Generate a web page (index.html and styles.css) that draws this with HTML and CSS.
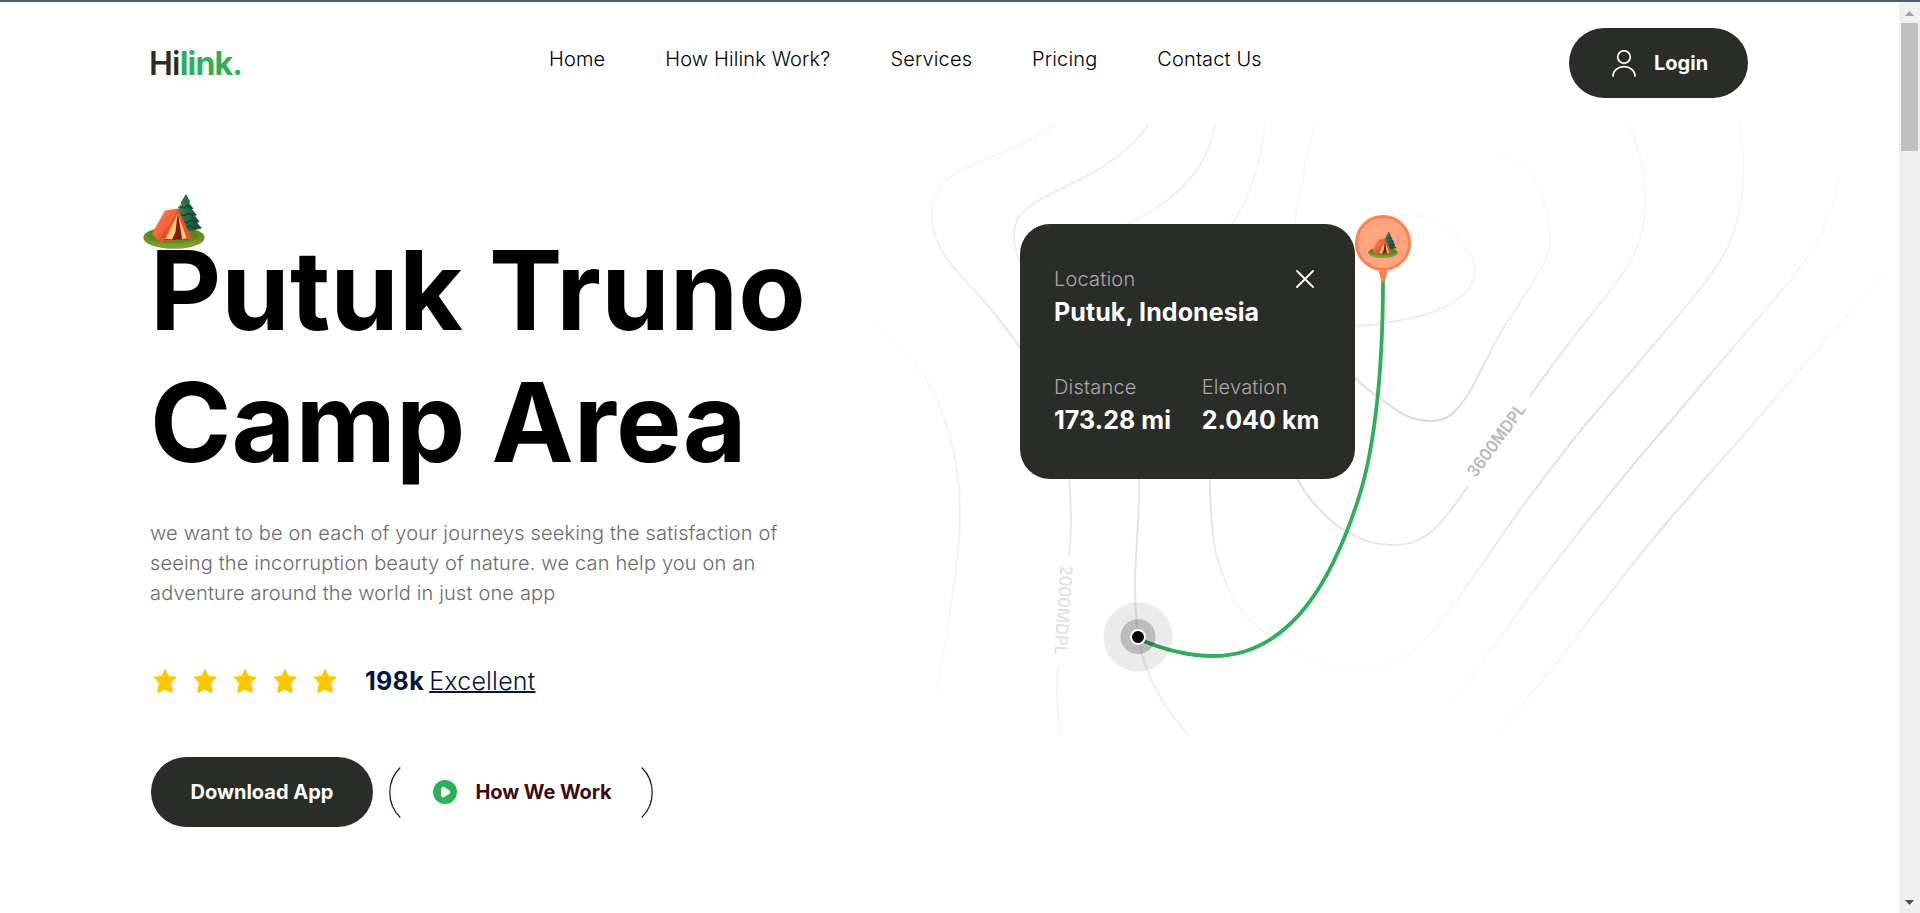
FILE: index.html
```html
<!DOCTYPE html>
<html lang="en">
<head>
<meta charset="utf-8">
<title>Hilink</title>
<link rel="stylesheet" href="styles.css">
</head>
<body>
<svg class="defs" width="0" height="0" aria-hidden="true">
  <defs>
    <linearGradient id="grass" x1="0" y1="0" x2="0" y2="1"><stop offset="0" stop-color="#5f7d1c"/><stop offset=".6" stop-color="#6c9226"/><stop offset="1" stop-color="#86a832"/></linearGradient>
    <linearGradient id="canvas" x1="0" y1="0" x2="1" y2="1"><stop offset="0" stop-color="#fb8a5c"/><stop offset=".5" stop-color="#f4643a"/><stop offset="1" stop-color="#e0492a"/></linearGradient>
    <linearGradient id="tree" x1="0" y1="0" x2="1" y2="0"><stop offset="0" stop-color="#3d8a5a"/><stop offset=".5" stop-color="#246345"/><stop offset="1" stop-color="#17452f"/></linearGradient>
    <symbol id="tent" viewBox="0 0 62 55">
      <ellipse cx="31" cy="43.6" rx="30.7" ry="11.2" fill="url(#grass)"/>
      <ellipse cx="30" cy="41.500" rx="25" ry="7.500" fill="#557a1d" opacity=".5"/>
      <path d="M43 0l4.500 8.500-1.500.2 4.500 6-1.500.5 5 6-2 .5 4.500 6-2.500 1 5 5.500-10 2.500-12-1-4-20 3-1-1-1.500 3.500-3-1-1.500z" fill="url(#tree)"/>
      <path d="M37 13l4 1 3-2 4 2M36 20l5 1.500 4-2 6 2M39 27l5 1.500 4-2 6 2M43 33l4-1 5 2" fill="none" stroke="#14402c" stroke-width="1.200"/>
      <path d="M22 16.500L35 14.500 15.500 47.500 9 39.500z" fill="url(#canvas)"/>
      <path d="M35 14.500L49 45l-33.500 2.500z" fill="#e9512d"/>
      <path d="M35 21l9.500 24.200-22.500 1z" fill="#8c160f"/>
      <path d="M34.500 20l-2 18-3.500 7.500-6.500-.5zM35 20l3 18 1 7 5-.5z" fill="#edcf7b"/>
    </symbol>
    <symbol id="star" viewBox="0 0 24 24">
      <path d="M12 .8l3.300 6.500 7.500 1.100-5.300 5.200 1.600 8.500c.2 1-.4 1.400-1.300.9L12 20l-5.800 3c-.9.5-1.500.1-1.300-.9l1.600-8.500L1.200 8.400l7.500-1.100z" fill="#ffc700" stroke="#ffc700" stroke-width="1.200" stroke-linejoin="round"/>
    </symbol>
  </defs>
</svg>

<div class="window">
  <div class="page">
    <header class="header">
      <a class="logo">Hi<span class="logo-accent">link.</span></a>
      <nav class="nav">
        <a>Home</a><a>How Hilink Work?</a><a>Services</a><a>Pricing</a><a>Contact Us</a>
      </nav>
      <button class="btn btn-login">
        <svg class="user-icon" viewBox="0 0 24 27"><g fill="none" stroke="#fff" stroke-width="1.700" stroke-linecap="round"><circle cx="12" cy="7" r="6.300"/><path d="M1 26c0-5.500 5-9.300 11-9.300S23 20.500 23 26"/></g></svg>
        Login
      </button>
    </header>

    <main class="hero">
      <section class="intro">
        <svg class="tent"><use href="#tent"/></svg>
        <h1 class="title">Putuk Truno Camp Area</h1>
        <p class="lead">we want to be on each of your journeys seeking the satisfaction of seeing the incorruption beauty of nature. we can help you on an adventure around the world in just one app</p>
        <div class="rating">
          <div class="stars">
            <svg class="star"><use href="#star"/></svg><svg class="star"><use href="#star"/></svg><svg class="star"><use href="#star"/></svg><svg class="star"><use href="#star"/></svg><svg class="star"><use href="#star"/></svg>
          </div>
          <p class="score"><b>198k</b> <a class="score-link">Excellent</a></p>
        </div>
        <div class="actions">
          <button class="btn btn-download">Download App</button>
          <button class="btn btn-work">
            <svg class="bracket" viewBox="0 0 12 51"><path d="M11.300.5a35 35 0 0 0 0 50" fill="none" stroke="#021639" stroke-width="1.200"/></svg>
            <svg class="play" viewBox="0 0 24 24"><circle cx="12" cy="12" r="12" fill="#30af5b"/><path d="M9.300 8.700c0-.8.700-1.100 1.400-.7l4.800 3.100c.7.500.7 1.400 0 1.900l-4.800 3.100c-.7.400-1.400.1-1.400-.7z" fill="#fff" stroke="#fff" stroke-width="2.200" stroke-linejoin="round"/></svg>
            <span class="work-label">How We Work</span>
            <svg class="bracket bracket-end" viewBox="0 0 12 51"><path d="M11.300.5a35 35 0 0 0 0 50" fill="none" stroke="#021639" stroke-width="1.200"/></svg>
          </button>
        </div>
      </section>

      <section class="map">
        <svg class="map-art" viewBox="870 124 1029 612">
          <defs>
            <radialGradient id="fade" gradientUnits="userSpaceOnUse" cx="1330" cy="430" r="520"><stop offset="0" stop-color="#dadada"/><stop offset=".25" stop-color="#e6e6e6"/><stop offset=".42" stop-color="#e2e2e2"/><stop offset=".54" stop-color="#e8e8e8"/><stop offset=".65" stop-color="#f4f4f4"/><stop offset=".85" stop-color="#f8f8f8"/><stop offset="1" stop-color="#fafafa"/></radialGradient>
            <linearGradient id="fall" gradientUnits="userSpaceOnUse" x1="0" y1="124" x2="0" y2="736"><stop offset="0" stop-color="#fafafa"/><stop offset=".2" stop-color="#f2f2f2"/><stop offset=".5" stop-color="#dfdfdf"/><stop offset=".63" stop-color="#e4e4e4"/><stop offset=".76" stop-color="#f3f3f3"/><stop offset=".88" stop-color="#fbfbfb"/><stop offset="1" stop-color="#ffffff"/></linearGradient>
            <linearGradient id="rise" gradientUnits="userSpaceOnUse" x1="0" y1="150" x2="0" y2="425"><stop offset="0" stop-color="#fefefe"/><stop offset=".35" stop-color="#f7f7f7"/><stop offset=".6" stop-color="#eee"/><stop offset="1" stop-color="#d8d8d8"/></linearGradient>
            <linearGradient id="far" gradientUnits="userSpaceOnUse" x1="0" y1="170" x2="0" y2="736"><stop offset="0" stop-color="#fefefe"/><stop offset=".2" stop-color="#f3f3f3"/><stop offset=".46" stop-color="#dfdfdf"/><stop offset=".62" stop-color="#e4e4e4"/><stop offset=".76" stop-color="#f1f1f1"/><stop offset=".9" stop-color="#fcfcfc"/><stop offset="1" stop-color="#ffffff"/></linearGradient>
            <linearGradient id="edge" gradientUnits="userSpaceOnUse" x1="1888" y1="267" x2="1499" y2="735"><stop offset="0" stop-color="#fefefe"/><stop offset=".35" stop-color="#eee"/><stop offset=".55" stop-color="#e2e2e2"/><stop offset=".8" stop-color="#f3f3f3"/><stop offset="1" stop-color="#fcfcfc"/></linearGradient>
            <linearGradient id="west" gradientUnits="userSpaceOnUse" x1="0" y1="320" x2="0" y2="707"><stop offset="0" stop-color="#fefefe"/><stop offset=".3" stop-color="#f2f2f2"/><stop offset=".5" stop-color="#efefef"/><stop offset="1" stop-color="#fefefe"/></linearGradient>
            <linearGradient id="north" gradientUnits="userSpaceOnUse" x1="1200" y1="0" x2="1330" y2="0"><stop offset="0" stop-color="#f1f1f1"/><stop offset="1" stop-color="#fafafa"/></linearGradient>
            <linearGradient id="upper" gradientUnits="userSpaceOnUse" x1="0" y1="124" x2="0" y2="350"><stop offset="0" stop-color="#f5f5f5"/><stop offset=".3" stop-color="#f7f7f7"/><stop offset="1" stop-color="#e4e4e4"/></linearGradient>
          </defs>
          <g fill="none" stroke-width="2">
            <path stroke="url(#upper)" d="M1056 124C1039 136 1021 145 1003 152C984 160 967 166 953 175C940 184 932 196 932 212C931 229 937 246 950 263C961 277 977 292 990 308C1001 321 1011 335 1022 350"/>
            <path stroke="#eeeeee" d="M1149 124C1142 134 1133 144 1123 152C1111 162 1097 171 1083 178C1071 184 1059 190 1047 196C1037 201 1029 206 1023 212C1016 219 1014 228 1014 237C1014 247 1016 255 1021 264"/>
            <path stroke="#f1f1f1" d="M1215 124C1213 137 1209 148 1203 160C1196 173 1187 183 1177 192C1162 206 1145 215 1126 225"/>
            <path stroke="url(#north)" d="M1265 124C1263 144 1259 163 1253 180C1248 196 1242 210 1231 225"/>
            <path stroke="url(#north)" d="M1316 124C1310 141 1306 159 1303 177L1294 225"/>
            <path stroke="url(#west)" d="M873 320C885 335 899 345 910 357C921 369 930 385 937 400Q943 413 948 430C956 457 960 484 960 510C960 533 958 555 955 577C951 605 947 632 942 660C939 676 936 690 935 707"/>
            <path stroke="url(#fade)" d="M1069 478C1071 502 1072 530 1069 556M1058 666C1056 690 1057 713 1061 736"/>
            <path stroke="url(#fade)" d="M1139 478C1140 515 1135 552 1135 587C1135 613 1137 635 1142 655C1150 682 1167 713 1190 736"/>
            <path stroke="url(#fall)" d="M1210 478C1210 500 1211 519 1213 537C1216 560 1223 579 1233 597C1244 616 1259 631 1277 640C1296 656 1317 663 1337 668C1352 671 1367 670 1380 666C1389 664 1397 661 1404 657C1418 648 1431 634 1442 618C1450 609 1457 601 1463 592L1514 518C1537 486 1559 458 1581 430L1645 355C1667 329 1689 304 1707 280C1720 263 1730 246 1735 227C1741 210 1743 194 1743 177C1743 159 1742 141 1740 124"/>
            <path stroke="url(#fade)" d="M1297 478C1303 490 1311 501 1320 510C1329 520 1339 528 1350 533C1363 541 1378 545 1392 545C1402 545 1411 544 1418 540C1429 535 1438 527 1445 517Q1457 503 1468 486M1530 396C1548 371 1567 345 1587 320C1602 301 1617 283 1628 265C1636 252 1641 239 1643 225C1646 213 1646 202 1645 190C1644 178 1643 167 1640 157Q1636 139 1629 124"/>
            <path stroke="url(#rise)" d="M1354 377Q1365 388 1380 398C1389 405 1398 412 1407 416C1416 420 1424 421 1432 421C1442 421 1450 417 1456 410C1466 400 1473 386 1480 372C1489 355 1497 338 1507 322Q1523 299 1538 273C1545 262 1550 253 1550 243C1551 232 1548 220 1545 207C1542 195 1538 184 1531 175C1526 167 1519 161 1511 157C1501 153 1491 152 1480 152Q1472 152 1462 153"/>
            <path stroke="url(#rise)" d="M1355 326Q1370 326 1385 323C1404 320 1422 317 1438 310C1451 305 1463 297 1470 287C1474 281 1475 275 1475 268C1474 258 1469 250 1463 243C1456 235 1448 228 1438 223C1429 218 1420 215 1411 215Q1401 214 1392 216"/>
            <path stroke="url(#far)" d="M1840 170C1838 184 1836 197 1831 210C1823 231 1813 250 1800 267C1785 288 1766 309 1748 330L1663 430Q1634 463 1607 497C1581 529 1556 561 1532 593Q1502 634 1473 675Q1452 706 1430 728"/>
            <path stroke="url(#edge)" d="M1888 267Q1868 291 1845 317L1748 430Q1708 475 1669 520C1651 541 1634 562 1618 583Q1588 621 1559 660C1538 685 1518 710 1499 735"/>
          </g>
          <text class="contour-high" transform="translate(1475.500 478.500) rotate(-53.500)" textLength="86" lengthAdjust="spacingAndGlyphs">3600MDPL</text>
          <text class="contour-low" transform="translate(1060.500 565) rotate(94)" textLength="90" lengthAdjust="spacingAndGlyphs">2000MDPL</text>

          <path d="M1383 279C1383 380 1373 455 1358 500C1336 568 1296 656 1213 656C1190 656 1165 650 1141 640" fill="none" stroke="#30af5b" stroke-width="3.800"/>
          <circle cx="1138" cy="637" r="34.700" fill="#000" opacity=".08"/>
          <circle cx="1138" cy="636.700" r="17.500" fill="#000" opacity=".2"/>
          <circle cx="1138" cy="637" r="7" fill="#000" stroke="#fff" stroke-width="2"/>
          <path d="M1377.500 269h11c-2 4-2.500 8-3.500 12.500h-4c-.5-4.500-1.500-8.500-3.500-12.500z" fill="#ff814c"/>
          <circle cx="1383" cy="243" r="26.500" fill="#ffa47e" stroke="#ff814c" stroke-width="3"/>
          <use href="#tent" x="1368" y="231.500" width="30" height="26.600"/>
        </svg>
        <article class="card">
          <div class="card-head">
            <span class="label">Location</span>
            <svg class="close" viewBox="0 0 18 18"><path d="M1 1l16 16M17 1L1 17" stroke="#fff" stroke-width="1.800" stroke-linecap="round"/></svg>
          </div>
          <p class="value">Putuk, Indonesia</p>
          <div class="stats">
            <div><span class="label">Distance</span><p class="value">173.28 mi</p></div>
            <div><span class="label">Elevation</span><p class="value">2.040 km</p></div>
          </div>
        </article>
      </section>
    </main>
  </div>

  <aside class="scrollbar">
    <svg class="arrow" viewBox="0 0 9 5"><path d="M0 5L4.500 0 9 5z" fill="#a3a3a3"/></svg>
    <div class="thumb"></div>
    <svg class="arrow arrow-down" viewBox="0 0 9 5"><path d="M0 0h9L4.500 5z" fill="#505050"/></svg>
  </aside>
</div>
</body>
</html>
```
FILE: styles.css
```css
* { box-sizing: border-box; }
body { margin: 0; background: #fff; font-family: Inter, "Liberation Sans", sans-serif; overflow: hidden; }
h1, p { margin: 0; }
svg { display: block; flex: none; }
button { font: inherit; border: 0; margin: 0; padding: 0; }
.defs { position: absolute; }

.window { display: flex; height: 913px; border-top: 2px solid #4c606c; }
.page { flex: 1; min-width: 0; }

.header { display: flex; align-items: center; height: 122px; padding: 0 151px 0 149px; }
.logo { width: 400px; padding-top: 2px; font-size: 32px; line-height: 40px; font-weight: 600; letter-spacing: -0.8px; color: #292c27; }
.logo-accent { color: #30af5b; font-weight: 700; }
.nav { display: flex; gap: 60px; padding-bottom: 8px; font-size: 20px; line-height: 24px; font-weight: 300; letter-spacing: 0.130px; color: #000; white-space: nowrap; }
.btn { display: flex; align-items: center; height: 70px; border-radius: 35px; font-size: 20px; font-weight: 700; background: #292c27; color: #fff; white-space: nowrap; }
.btn-login { width: 179px; margin-left: auto; padding-left: 43px; gap: 18px; }
.user-icon { width: 24px; height: 27px; }

.hero { display: flex; height: 612px; }
.intro { width: 870px; padding: 70px 0 0 150px; }
.tent { width: 62px; height: 55px; margin: 0 0 -25px -7px; position: relative; }
.title { width: 700px; font-size: 110px; line-height: 132px; font-weight: 700; letter-spacing: 0.100px; color: #000; }
.lead { width: 650px; margin-top: 30px; font-size: 20px; line-height: 30px; font-weight: 300; letter-spacing: 0.160px; color: #6b6b6b; }
.rating { display: flex; align-items: center; gap: 28px; margin-top: 55px; }
.stars { display: flex; gap: 16px; padding-left: 3px; }
.star { width: 24px; height: 24px; }
.score { font-size: 25px; line-height: 36px; font-weight: 300; letter-spacing: 0.200px; word-spacing: -2px; color: #021639; white-space: nowrap; }
.score b { font-weight: 700; letter-spacing: 0.300px; }
.score-link { text-decoration: underline; text-decoration-thickness: 2px; }
.actions { display: flex; gap: 16px; margin-top: 58px; padding-left: 1px; }
.btn-download { width: 222px; justify-content: center; }
.btn-work { width: 264px; background: none; color: #3d0c11; letter-spacing: -0.100px; }
.bracket { width: 12px; height: 51px; }
.bracket-end { margin-left: auto; transform: scaleX(-1); }
.play { width: 24px; height: 24px; margin: 0 18.500px 0 32px; }

.map { position: relative; flex: 1; padding: 100px 0 0 150px; }
.map-art { position: absolute; left: 0; top: 0; width: 1029px; height: 612px; }
.contour-high, .contour-low { font: 600 17px Inter, sans-serif; fill: #b9b9b9; }
.contour-low { font-weight: 500; fill: #e0e0e0; }
.card { position: relative; width: 335px; height: 255px; padding: 40px 35px 0 34px; border-radius: 30px; background: #292c27; }
.card-head { display: flex; justify-content: space-between; align-items: center; padding-right: 6px; }
.label { display: block; font-size: 20px; line-height: 30px; font-weight: 300; letter-spacing: 0.200px; color: #a9a9a9; }
.close { width: 18px; height: 18px; }
.value { font-size: 25px; line-height: 36px; font-weight: 700; letter-spacing: 0.080px; color: #fff; white-space: nowrap; }
.stats { display: flex; gap: 30.500px; margin-top: 42px; }

.scrollbar { display: flex; flex-direction: column; align-items: center; width: 21px; background: #f0f0f0; }
.arrow { width: 9px; height: 5px; margin: 9px 0 7px; }
.thumb { width: 17px; height: 128px; background: #c1c1c1; }
.arrow-down { margin: auto 0 8px; }
```
